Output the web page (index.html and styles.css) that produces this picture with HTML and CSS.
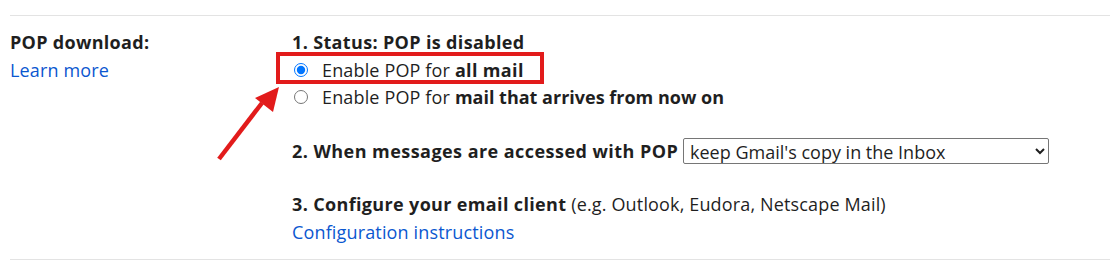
FILE: index.html
```html
<!DOCTYPE html>
<html>
<head>
<meta charset="utf-8">
<link rel="stylesheet" href="styles.css">
</head>
<body>
<div class="page">
  <div class="setting-row">
    <div class="label-col">
      <div class="label-title">POP download:</div>
      <a class="link" href="#">Learn more</a>
    </div>
    <div class="value-col">
      <div class="line bold">1. Status: POP is disabled</div>
      <label class="line radio-line"><input type="radio" name="pop" class="radio" checked>Enable POP for&nbsp;<b>all mail</b></label>
      <label class="line radio-line"><input type="radio" name="pop" class="radio">Enable POP for&nbsp;<b class="tight">mail that arrives from now on</b></label>
      <div class="line section"><b class="wide">2. When messages are accessed with POP</b>&nbsp;<select class="select"><option>keep Gmail's copy in the Inbox</option></select></div>
      <div class="line section"><b>3. Configure your email client</b> (e.g. Outlook, Eudora, Netscape Mail)</div>
      <a class="line link" href="#">Configuration instructions</a>
    </div>
  </div>
  <svg class="annotation" width="1110" height="264" viewBox="0 0 1110 264">
    <rect x="278" y="54" width="264" height="28" fill="none" stroke="#e21b1b" stroke-width="4"/>
    <line x1="219" y1="159" x2="262" y2="103" stroke="#e21b1b" stroke-width="4.5"/>
    <polygon points="279,87 255,98 273,112" fill="#e21b1b"/>
  </svg>
</div>
</body>
</html>
```
FILE: styles.css
```css
html, body {
  margin: 0;
  padding: 0;
  background: #fff;
}
.page {
  position: relative;
  width: 1110px;
  height: 264px;
  padding-top: 15px;
  padding-left: 10px;
  box-sizing: border-box;
  font-family: "Open Sans", Roboto, Arial, sans-serif;
  font-size: 18px;
  letter-spacing: 0.15px;
  color: #1f1f1f;
}
.setting-row {
  display: grid;
  grid-template-columns: 282px 1fr;
  border-top: 1px solid #e3e3e3;
  border-bottom: 1px solid #e3e3e3;
  padding: 12.5px 0 13px;
}
.label-col, .value-col {
  display: flex;
  flex-direction: column;
  align-items: flex-start;
}
.label-title {
  font-weight: 700;
  height: 27.5px;
  display: flex;
  align-items: center;
  letter-spacing: 0.3px;
}
.label-col .link {
  height: 27.5px;
  display: flex;
  align-items: center;
}
.link {
  color: #0b57d0;
  text-decoration: none;
}
.bold, b {
  font-weight: 700;
  letter-spacing: 0.35px;
}
b.tight {
  letter-spacing: 0;
}
b.wide {
  letter-spacing: 0.45px;
}
.line {
  display: flex;
  align-items: center;
  height: 27.5px;
  white-space: pre;
}
.radio {
  width: 14px;
  height: 14px;
  margin: 0 14px 0 2px;
}
.section {
  margin-top: 26px;
}
.select {
  width: 366px;
  height: 26px;
  font-family: inherit;
  font-size: 18px;
  letter-spacing: 0;
  color: #1f1f1f;
  padding: 0 2px;
  border: 1px solid #767676;
  border-radius: 2px;
  background: #fff;
}
.annotation {
  position: absolute;
  left: 0;
  top: 0;
  pointer-events: none;
}
```
